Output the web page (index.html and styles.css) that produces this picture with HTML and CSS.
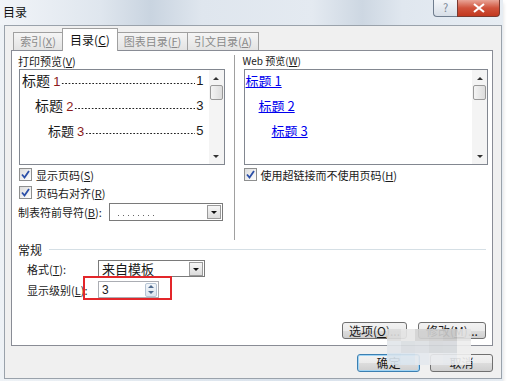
FILE: index.html
```html
<!DOCTYPE html>
<html>

<head>
    <link rel="stylesheet" href="styles.css">
</head>

<body>
    <div class="window">
        <div class="titlebar">
            <span class="title">目录</span>
            <div class="caption-btns">
                <span class="cap-help">?</span>
                <span class="cap-close">
                    <svg width="12" height="10" viewBox="0 0 12 10"><path d="M1 1 L11 9 M11 1 L1 9" stroke="#fff" stroke-width="2.2" /></svg>
                </span>
            </div>
        </div>

        <div class="client">
            <div class="tabs">
                <div class="tab t1">索引(<u>X</u>)</div>
                <div class="tab active t2">目录(<u>C</u>)</div>
                <div class="tab t3">图表目录(<u>F</u>)</div>
                <div class="tab t4">引文目录(<u>A</u>)</div>
            </div>

            <div class="panel">
                <div class="top">
                    <div class="col left-col">
                        <div class="label">打印预览(<u>V</u>)</div>
                        <div class="preview">
                            <div class="preview-body">
                                <div class="toc-line"><span class="head">标题 <em>1</em></span><span class="dots"></span><span class="pg">1</span></div>
                                <div class="toc-line lv2"><span class="head">标题 <em>2</em></span><span class="dots"></span><span class="pg">3</span></div>
                                <div class="toc-line lv3"><span class="head">标题 <em>3</em></span><span class="dots"></span><span class="pg">5</span></div>
                            </div>
                            <div class="vscroll">
                                <span class="arr up"></span>
                                <span class="thumb"></span>
                                <span class="arr down"></span>
                            </div>
                        </div>
                        <div class="check-row"><span class="chk"><svg width="11" height="11" viewBox="0 0 11 11"><path d="M2 5.5 L4.5 8.5 L9 2" fill="none" stroke="#2b4fa8" stroke-width="1.8" /></svg></span>显示页码(<u>S</u>)</div>
                        <div class="check-row"><span class="chk"><svg width="11" height="11" viewBox="0 0 11 11"><path d="M2 5.5 L4.5 8.5 L9 2" fill="none" stroke="#2b4fa8" stroke-width="1.8" /></svg></span>页码右对齐(<u>R</u>)</div>
                        <div class="field-row leader-row">
                            <span class="field-label">制表符前导符(<u>B</u>):</span>
                            <div class="combo leader-combo">
                                <span class="combo-val leader-val"></span>
                                <span class="combo-btn"></span>
                            </div>
                        </div>
                    </div>

                    <div class="divider"></div>

                    <div class="col right-col">
                        <div class="label web-label">Web 预览(<u>W</u>)</div>
                        <div class="preview">
                            <div class="preview-body web-body">
                                <div class="web-line"><a href="#">标题 1</a></div>
                                <div class="web-line wl2"><a href="#">标题 2</a></div>
                                <div class="web-line wl3"><a href="#">标题 3</a></div>
                            </div>
                            <div class="vscroll">
                                <span class="arr up"></span>
                                <span class="thumb"></span>
                                <span class="arr down"></span>
                            </div>
                        </div>
                        <div class="check-row"><span class="chk"><svg width="11" height="11" viewBox="0 0 11 11"><path d="M2 5.5 L4.5 8.5 L9 2" fill="none" stroke="#2b4fa8" stroke-width="1.8" /></svg></span>使用超链接而不使用页码(<u>H</u>)</div>
                    </div>
                </div>

                <div class="group-head">
                    <span>常规</span>
                    <span class="group-line"></span>
                </div>

                <div class="field-row general-row">
                    <span class="field-label gen-label">格式(<u>T</u>):</span>
                    <div class="combo format-combo">
                        <span class="combo-val">来自模板</span>
                        <span class="combo-btn"></span>
                    </div>
                </div>

                <div class="field-row general-row level-row">
                    <span class="field-label gen-label">显示级别(<u>L</u>):</span>
                    <div class="spin">
                        <span class="spin-val">3</span>
                        <span class="spin-btns">
                            <span class="spin-up"></span>
                            <span class="spin-down"></span>
                        </span>
                    </div>
                    <div class="mark"></div>
                </div>

                <div class="panel-btns">
                    <span class="btn opt-btn">选项(<u>O</u>)...</span>
                    <span class="btn mod-btn">修改(<u>M</u>)...</span>
                </div>
            </div>

            <div class="footer">
                <span class="btn default">确定</span>
                <span class="btn">取消</span>
            </div>

            <div class="mosaic">
                <span style="background:#dcdcdc"></span><span style="background:#e6e6e6"></span><span style="background:#d2d2d2"></span><span style="background:#cfcfcf"></span><span style="background:#c9c9c9"></span><span style="background:#e3e3e3"></span>
                <span style="background:#e2e6ea"></span><span style="background:#d9dde1"></span><span style="background:#dcdfe3"></span><span style="background:#d5d8db"></span><span style="background:#d6d9dd"></span><span style="background:#eeeeee"></span>
                <span style="background:#d8e4ee"></span><span style="background:#dbe6ef"></span><span style="background:#e4e9ee"></span><span style="background:#e9ebee"></span><span style="background:#e7eaee"></span><span style="background:#f0f0f0"></span>
            </div>
        </div>
    </div>
</body>

</html>
```

FILE: styles.css
```css
body {
    margin: 0;
    background-color: #fff;
    font-family: "Noto Sans CJK SC", "DejaVu Sans", sans-serif;
    font-size: 11px;
    color: #1a1a1a;
}

u {
    text-decoration: underline;
}

.window {
    width: 503px;
    height: 381px;
    display: flex;
    flex-direction: column;
    background: linear-gradient(to right, #eef2f6, #e2e9f0 30%, #d9e2ec 60%, #e6ecf2);
    box-shadow: 0 3px 4px rgba(0, 0, 0, 0.15);
}

/* title bar */
.titlebar {
    height: 25px;
    display: flex;
    align-items: flex-start;
    justify-content: space-between;
    background: linear-gradient(to right, #f1f4f8 0, #dfe6ee 20%, #c9d4e0 30%, #dfe6ee 40%, #e4eaf1 62%, #cdd7e2 72%, #e0e7ef 80%, #e7edf3 100%);
}

.title {
    margin: 5px 0 0 3px;
    font-size: 12px;
    line-height: 14px;
    color: #111;
}

.caption-btns {
    display: flex;
    margin-right: 3px;
}

.cap-help {
    width: 23px;
    height: 16px;
    border: 1px solid #6f7d8e;
    border-top: none;
    border-right: none;
    border-radius: 0 0 0 4px;
    background: linear-gradient(#f4f6f9, #d7dee7);
    color: #7b8794;
    font-size: 11px;
    line-height: 15px;
    text-align: center;
}

.cap-close {
    width: 41px;
    height: 16px;
    border: 1px solid #7a3a30;
    border-top: none;
    border-radius: 0 0 4px 0;
    background: linear-gradient(#e9a597, #d0533c 50%, #c2381f);
    display: flex;
    align-items: center;
    justify-content: center;
}

/* client area */
.client {
    flex: 1;
    margin: 0 1px 2px 4px;
    border: 1px solid #9aa2ab;
    background-color: #f0f0f0;
    display: flex;
    flex-direction: column;
    position: relative;
}

.tabs {
    display: flex;
    align-items: flex-end;
    margin: 2px 0 0 8px;
    height: 22px;
    position: relative;
    z-index: 1;
}

.tab {
    height: 18px;
    box-sizing: border-box;
    border: 1px solid #a0a0a0;
    border-bottom: none;
    background: linear-gradient(#f5f5f5, #e3e3e3);
    color: #8a8a8a;
    font-size: 11px;
    line-height: 17px;
    text-align: center;
}

.t1 { width: 49px; border-right: none; }
.t2 { width: 56px; }
.t3 { width: 70px; border-left: none; }
.t4 { width: 71px; border-left: none; }

.tab.active {
    height: 23px;
    margin-bottom: -1px;
    background: #fff;
    color: #111;
    line-height: 21px;
    font-size: 12px;
}

/* tab panel */
.panel {
    margin: 0 8px 0 6px;
    height: 296px;
    box-sizing: border-box;
    border: 1px solid #898c95;
    background: #fff;
    padding: 3px 4px 0 6px;
    display: flex;
    flex-direction: column;
}

.top {
    display: flex;
    height: 186px;
}

.col {
    display: flex;
    flex-direction: column;
}

.left-col {
    width: 207px;
}

.right-col {
    width: 246px;
}

.divider {
    width: 1px;
    background: #a0a0a0;
    margin: 1px 8px 0 9px;
}

.label {
    height: 14px;
    line-height: 14px;
}

.web-label {
    font-size: 10px;
}

.preview {
    margin: 1px 0 0 1px;
    height: 96px;
    box-sizing: border-box;
    border: 1px solid #828790;
    display: flex;
}

.preview-body {
    flex: 1;
    display: flex;
    flex-direction: column;
    gap: 4px;
    padding: 0 5px 0 2px;
    overflow: hidden;
}

.toc-line {
    display: flex;
    height: 21px;
    line-height: 21px;
    font-size: 14px;
    white-space: nowrap;
}

.toc-line em {
    font-style: normal;
    color: #8b1a1a;
    font-size: 13px;
    font-family: "Liberation Sans", sans-serif;
}

.toc-line .dots {
    flex: 1;
    margin: 0 1px 6px 1px;
    background-image: radial-gradient(circle, #222 0.7px, transparent 1px);
    background-size: 3.4px 3px;
    background-repeat: repeat-x;
    background-position: left bottom;
}

.toc-line .pg {
    font-family: "Liberation Sans", sans-serif;
    font-size: 13px;
}

.lv2 { padding-left: 13px; }
.lv3 { padding-left: 26px; font-size: 13px; }

.web-body {
    padding-left: 1px;
}

.web-line {
    height: 21px;
    line-height: 21px;
    font-size: 13px;
}

.web-line a {
    color: #0000ee;
}

.wl2 { padding-left: 13px; }
.wl3 { padding-left: 26px; }

.vscroll {
    width: 15px;
    background: #f4f4f4;
    display: flex;
    flex-direction: column;
    align-items: center;
}

.arr {
    width: 0;
    height: 0;
    border-left: 3px solid transparent;
    border-right: 3px solid transparent;
}

.arr.up {
    margin-top: 7px;
    border-bottom: 3px solid #333;
}

.arr.down {
    margin-top: auto;
    margin-bottom: 6px;
    border-top: 3px solid #333;
}

.thumb {
    margin-top: 5px;
    width: 11px;
    height: 13px;
    border: 1px solid #999;
    border-radius: 2px;
    background: linear-gradient(to right, #f4f4f4, #dcdcdc);
}

.check-row {
    display: flex;
    align-items: center;
    height: 17px;
    margin-top: 1px;
    white-space: nowrap;
}

.check-row .chk {
    width: 11px;
    height: 11px;
    margin: 0 4px 0 1px;
    border: 1px solid #8e8f8f;
    background: linear-gradient(135deg, #dcdcdc, #fff);
    display: flex;
}

.field-row {
    display: flex;
    align-items: center;
}

.leader-row {
    margin-top: 2px;
}

.field-label {
    white-space: nowrap;
}

.combo {
    height: 18px;
    box-sizing: border-box;
    border: 1px solid #7a7a7a;
    background: #fff;
    display: flex;
    align-items: center;
}

.leader-combo {
    margin-left: 7px;
    width: 114px;
}

.combo-val {
    flex: 1;
    padding-left: 3px;
    font-size: 13px;
}

.leader-val {
    align-self: stretch;
    margin: 0 6px 0 6px;
    background-image: radial-gradient(circle, #666 0.6px, transparent 0.9px);
    background-size: 5px 3px;
    background-repeat: repeat-x;
    background-position: left 10px;
    max-width: 36px;
}

.combo-btn {
    width: 14px;
    height: 14px;
    margin: 0 1px 0 auto;
    box-sizing: border-box;
    border: 1px solid #9a9a9a;
    background: linear-gradient(#f6f6f6, #dcdcdc);
    position: relative;
}

.combo-btn::after {
    content: "";
    position: absolute;
    left: 3px;
    top: 5px;
    border-left: 3px solid transparent;
    border-right: 3px solid transparent;
    border-top: 3px solid #111;
}

/* general group */
.group-head {
    display: flex;
    align-items: center;
    height: 14px;
    margin-top: 2px;
    font-size: 12px;
}

.group-line {
    flex: 1;
    height: 1px;
    background: #d5dfe5;
    margin: 1px 2px 0 7px;
}

.general-row {
    margin-top: 4px;
    height: 17px;
}

.gen-label {
    width: 71px;
    padding-left: 9px;
}

.format-combo {
    width: 107px;
    height: 17px;
}

.spin {
    width: 61px;
    height: 17px;
    box-sizing: border-box;
    border: 1px solid #abadb3;
    background: #fff;
    display: flex;
    align-items: center;
}

.spin-val {
    flex: 1;
    padding-left: 3px;
    font-family: "Liberation Sans", sans-serif;
    font-size: 12px;
}

.spin-btns {
    width: 12px;
    height: 14px;
    margin-right: 1px;
    display: flex;
    flex-direction: column;
    border: 1px solid #b6c4d4;
    border-radius: 2px;
    box-sizing: border-box;
    background: linear-gradient(#f2f6fa, #dde6ef);
    align-items: center;
    justify-content: space-around;
}

.spin-up {
    border-left: 3px solid transparent;
    border-right: 3px solid transparent;
    border-bottom: 3px solid #4e6a8e;
}

.spin-down {
    border-left: 3px solid transparent;
    border-right: 3px solid transparent;
    border-top: 3px solid #4e6a8e;
}

.level-row {
    position: relative;
}

.mark {
    position: absolute;
    left: 65px;
    top: -5px;
    width: 89px;
    height: 24px;
    box-sizing: border-box;
    border: 2px solid #e3262a;
}

/* buttons */
.panel-btns {
    display: flex;
    justify-content: flex-end;
    gap: 11px;
    margin: 24px 2px 0 0;
}

.btn {
    height: 17px;
    box-sizing: border-box;
    border: 1px solid #707070;
    border-radius: 3px;
    background: linear-gradient(#f2f2f2 0, #ebebeb 50%, #dddddd 51%, #cfcfcf 100%);
    font-size: 12px;
    line-height: 15px;
    text-align: center;
}

.opt-btn { width: 65px; }
.mod-btn { width: 68px; }

.footer {
    display: flex;
    justify-content: flex-end;
    gap: 10px;
    margin: 8px 8px 0 0;
}

.footer .btn {
    width: 63px;
    height: 18px;
    line-height: 16px;
}

.footer .btn.default {
    border-color: #3c7fb1;
    box-shadow: inset 0 0 0 1px #9fd4f5;
}

/* blurred watermark */
.mosaic {
    position: absolute;
    left: 382px;
    top: 303px;
    width: 84px;
    height: 36px;
    display: grid;
    grid-template-columns: repeat(6, 1fr);
    grid-template-rows: repeat(3, 1fr);
    opacity: 0.9;
}
```
